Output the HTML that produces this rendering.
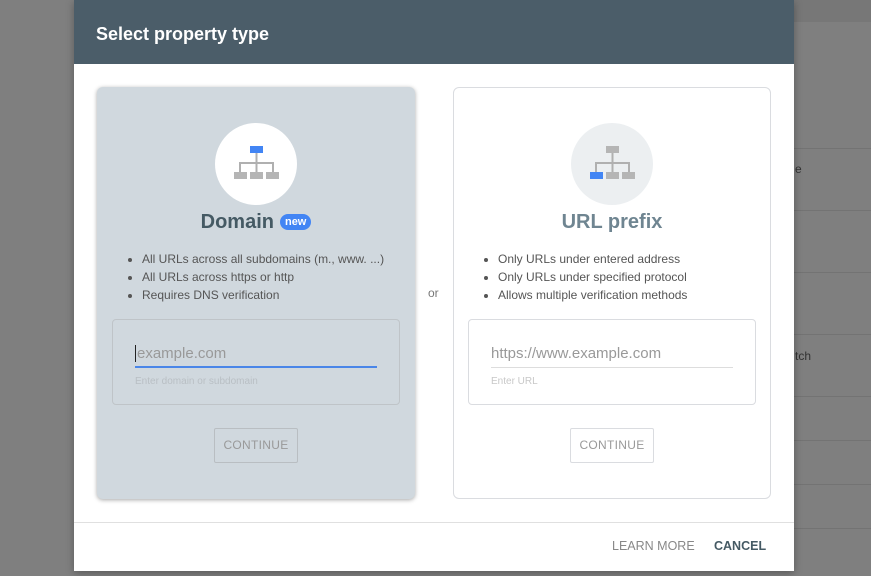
<!DOCTYPE html>
<html><head><meta charset="utf-8"><style>
*{margin:0;padding:0;box-sizing:border-box}
body{width:871px;height:576px;overflow:hidden;background:#7f7f7f;font-family:"Liberation Sans",Arial,sans-serif;position:relative}
.bgtop{position:absolute;left:794px;top:0;width:77px;height:22px;background:#777}
.hl{position:absolute;left:794px;width:77px;height:1px;background:#737373}
.bt{position:absolute;color:#333;font-size:12px}
.dlg{position:absolute;left:74px;top:0;width:720px;height:571px;background:#fff;box-shadow:0 2px 8px rgba(0,0,0,.3)}
.hdr{height:64px;background:#4b5d69;color:#fff;font-weight:bold;font-size:18px;padding:24px 0 0 22px}
.card{position:absolute;top:87px;width:318px;height:412px;border-radius:6px}
.c1{left:23px;background:#d0d8de;box-shadow:0 1px 4px rgba(0,0,0,.35)}
.c2{left:379px;background:#fff;border:1px solid #dadce0}
.circ{position:absolute;left:118px;top:36px;width:82px;height:82px;border-radius:50%}
.title{position:absolute;top:124px;width:100%;text-align:center;font-size:20px;font-weight:bold}
.new{display:inline-block;background:#4285f4;color:#fff;font-size:11px;border-radius:9px;padding:2px 5px;vertical-align:3px;margin-left:6px;font-weight:bold}
ul{position:absolute;left:45px;top:163px;font-size:12px;color:#555;line-height:18px;padding-left:0}
li{margin-left:0;list-style:disc}
.box{position:absolute;left:15px;top:232px;width:288px;height:86px;border:1px solid #bfc4c8;border-radius:4px}
.inp{position:absolute;left:22px;top:23px;width:242px;height:25px;font-size:15px;color:#999;border-bottom:2px solid #4a86e8;padding-top:2px}
.hint{position:absolute;left:22px;top:56px;font-size:10px;color:#b9bfc4}
.btn{position:absolute;top:341px;width:84px;height:35px;border:1px solid #b9bec2;border-radius:2px;font-size:12px;color:#999;text-align:center;line-height:33px;letter-spacing:.3px}
.foot{position:absolute;left:0;top:522px;width:720px;height:1px;background:#e0e0e0}
.fb{position:absolute;top:539px;font-size:12.5px}
</style></head><body>
<div class="bgtop"></div>
<div class="hl" style="top:148px"></div><div class="hl" style="top:210px"></div><div class="hl" style="top:272px"></div><div class="hl" style="top:334px"></div><div class="hl" style="top:396px"></div><div class="hl" style="top:440px"></div><div class="hl" style="top:484px"></div><div class="hl" style="top:528px"></div>
<div class="bt" style="left:795px;top:162px">e</div>
<div class="bt" style="left:795px;top:349px">tch</div>
<div class="dlg">
<div class="hdr">Select property type</div>
<div class="card c1">
<div class="circ" style="background:#fff">
<svg width="82" height="82" viewBox="0 0 82 82"><rect x="35" y="23" width="13" height="7" fill="#4285f4"/><path d="M41.5 30v10M25 49v-9h33v9M41.5 40v9" stroke="#b0b0b0" stroke-width="2" fill="none"/><rect x="19" y="49" width="13" height="7" fill="#b5b5b5"/><rect x="35" y="49" width="13" height="7" fill="#b5b5b5"/><rect x="51" y="49" width="13" height="7" fill="#b5b5b5"/></svg>
</div>
<div class="title" style="color:#455a64">Domain<span class="new">new</span></div>
<ul><li>All URLs across all subdomains (m., www. ...)</li><li>All URLs across https or http</li><li>Requires DNS verification</li></ul>
<div class="box"><div class="inp"><span style="border-left:1px solid #222;margin-right:1px"></span>example.com</div><div class="hint">Enter domain or subdomain</div></div>
<div class="btn" style="left:117px">CONTINUE</div>
</div>
<div style="position:absolute;left:354px;top:286px;font-size:12px;color:#777">or</div>
<div class="card c2">
<div class="circ" style="background:#eceff1;left:117px;top:35px">
<svg width="82" height="82" viewBox="0 0 82 82"><rect x="35" y="23" width="13" height="7" fill="#b5b5b5"/><path d="M41.5 30v10M25 49v-9h33v9M41.5 40v9" stroke="#b0b0b0" stroke-width="2" fill="none"/><rect x="19" y="49" width="13" height="7" fill="#4285f4"/><rect x="35" y="49" width="13" height="7" fill="#b5b5b5"/><rect x="51" y="49" width="13" height="7" fill="#b5b5b5"/></svg>
</div>
<div class="title" style="color:#6f8591;top:123px">URL prefix</div>
<ul style="left:44px;top:162px"><li>Only URLs under entered address</li><li>Only URLs under specified protocol</li><li>Allows multiple verification methods</li></ul>
<div class="box" style="left:14px;top:231px;border-color:#dadce0"><div class="inp" style="border-bottom:1px solid #ddd">https://www.example.com</div><div class="hint" style="color:#c8c8c8">Enter URL</div></div>
<div class="btn" style="left:116px;top:340px;border-color:#dadce0">CONTINUE</div>
</div>
<div class="foot"></div>
<div class="fb" style="left:538px;color:#888">LEARN MORE</div>
<div class="fb" style="left:640px;color:#455a64;font-weight:bold">CANCEL</div>
</div>
</body></html>
